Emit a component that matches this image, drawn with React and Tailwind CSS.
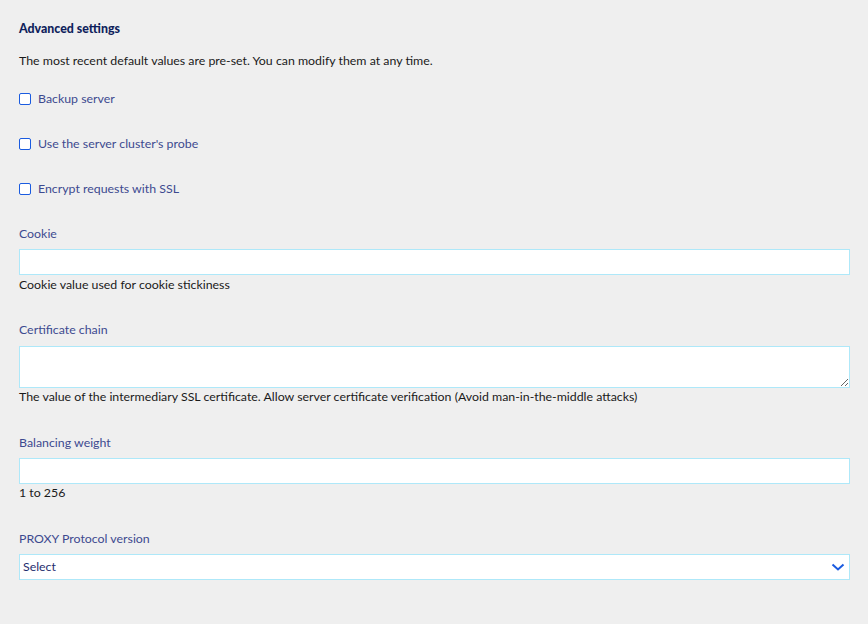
import React from 'react';

const font = { fontFamily: 'Lato, "Noto Sans", sans-serif' };

const Check = ({ label, className }) => (
  <label className={`flex items-center h-[18px] ${className}`}>
    <span className="w-[12px] h-[12px] border border-[#1a5be0] rounded-[2px] bg-white mr-[7px]" />
    <span className="text-[#3d4a8f]">{label}</span>
  </label>
);

const App = () => {
  return (
    <div className="min-h-[624px] bg-[#efefef] pt-[20px] pl-[19px] pr-[18px] text-[12.35px] leading-[18px]" style={font}>
      <h2 className="font-black text-[#0f1f5c] h-[18px]">Advanced settings</h2>
      <p className="mt-[14px] text-[#1a1a1a]">The most recent default values are pre-set. You can modify them at any time.</p>

      <Check label="Backup server" className="mt-[20px]" />
      <Check label="Use the server cluster's probe" className="mt-[27px]" />
      <Check label="Encrypt requests with SSL" className="mt-[27px]" />

      <div className="mt-[27px] text-[#3d4a8f]">Cookie</div>
      <input type="text" className="mt-[6px] block w-full h-[26px] bg-white border border-[#aee8f9] outline-none" />
      <div className="mt-[1px] text-[#1a1a1a]">Cookie value used for cookie stickiness</div>

      <div className="mt-[27px] text-[#3d4a8f]">Certificate chain</div>
      <textarea className="mt-[7px] block w-full h-[42px] bg-white border border-[#aee8f9] outline-none" />
      <div className="text-[#1a1a1a]">The value of the intermediary SSL certificate. Allow server certificate verification (Avoid man-in-the-middle attacks)</div>

      <div className="mt-[28px] text-[#3d4a8f]">Balancing weight</div>
      <input type="text" className="mt-[6px] block w-full h-[26px] bg-white border border-[#aee8f9] outline-none" />
      <div className="text-[#1a1a1a]">1 to 256</div>

      <div className="mt-[28px] text-[#3d4a8f]">PROXY Protocol version</div>
      <div className="mt-[6px] flex items-center justify-between w-full h-[26px] bg-white border border-[#aee8f9] pl-[3px] pr-[4px]">
        <span className="text-[#1f2d6e]">Select</span>
        <svg width="14" height="14" viewBox="0 0 14 14" fill="none">
          <path d="M1.5 4.5 L7 9.5 L12.5 4.5" stroke="#1a5be0" strokeWidth="2" />
        </svg>
      </div>
    </div>
  );
};

export default App;
